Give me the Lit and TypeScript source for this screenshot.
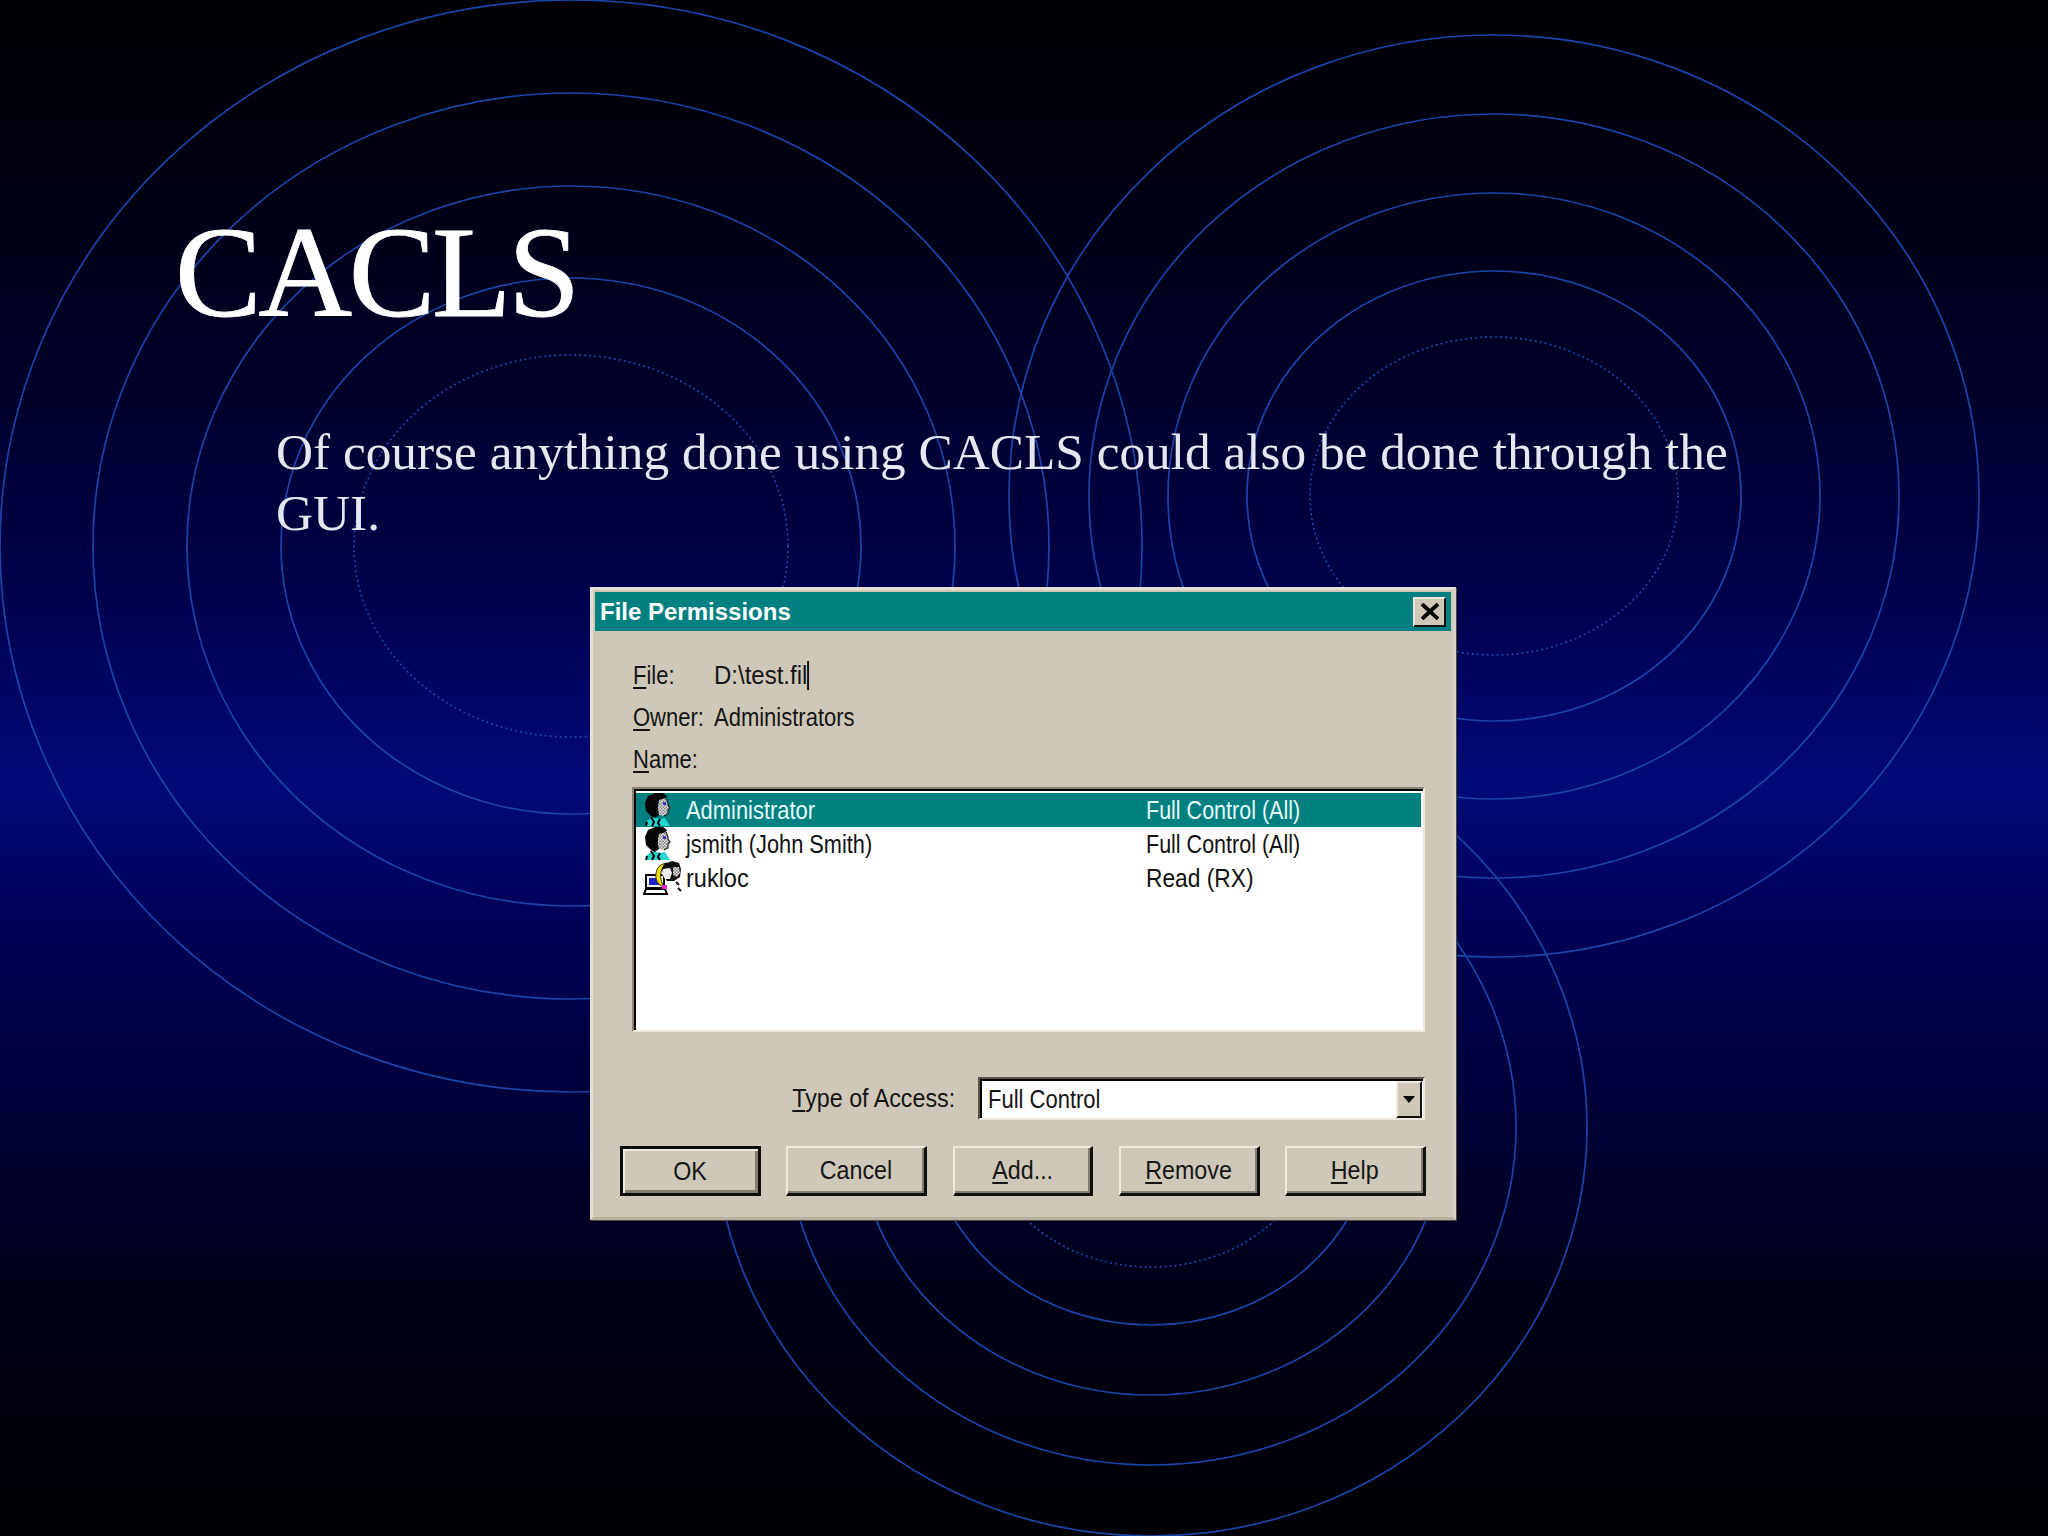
import { LitElement, html, css, svg } from "lit";
import { customElement } from "lit/decorators.js";

type Ring = { rx: number; ry: number; dotted?: boolean };
const SETS: { cx: number; cy: number; rings: Ring[] }[] = [
  {
    cx: 571, cy: 546,
    rings: [
      { rx: 571, ry: 546 }, { rx: 478, ry: 453 }, { rx: 384, ry: 360 }, { rx: 290, ry: 268 },
      { rx: 217, ry: 191, dotted: true },
    ],
  },
  {
    cx: 1494, cy: 496,
    rings: [
      { rx: 485, ry: 461 }, { rx: 405, ry: 382 }, { rx: 326, ry: 303 }, { rx: 247, ry: 225 },
      { rx: 184, ry: 159, dotted: true },
    ],
  },
  {
    cx: 1151, cy: 1127,
    rings: [
      { rx: 436, ry: 409 }, { rx: 365, ry: 338 }, { rx: 293, ry: 268 }, { rx: 222, ry: 198 },
      { rx: 166, ry: 140, dotted: true },
    ],
  },
];

const man = svg`<svg class="ico" viewBox="0 0 30 34" width="30" height="34">
  <defs><pattern id="d" width="3" height="3" patternUnits="userSpaceOnUse"><rect width="3" height="3" fill="#e8e8e8"/><rect width="1.5" height="1.5" fill="#808080"/><rect x="1.5" y="1.5" width="1.5" height="1.5" fill="#808080"/></pattern></defs>
  <path d="M4 28 L10 24 L17 26 L22 25 L27 33 L3 33Z" fill="#1fd6d2"/>
  <path d="M8 24 L11 29 L9 33 M17 26 L15 30 L17 33 M4 29 L3 33" stroke="#000" stroke-width="2" fill="none"/>
  <path d="M5 3 L12 0 L20 0 L24 3 L22 6 L16 8 L15 14 L16 22 L12 25 L8 23 L3 18 L2 10Z" fill="#060606"/>
  <path d="M16 7 L23 5 L25 10 L25 12 L27 15 L25 17 L25 21 L21 23 L16 22 L15 15Z" fill="url(#d)"/>
  <path d="M23 5 L25 10 L25 12 L27 15 L25 17 L25 21 L21 23" stroke="#222" stroke-width="1.2" fill="none"/>
  <rect x="20" y="9" width="3" height="3" fill="#3a32b8"/>
</svg>`;

const group = svg`<svg class="ico" viewBox="0 0 40 34" width="40" height="34">
  <rect x="3" y="14" width="18" height="13" fill="#f4f4f4" stroke="#000" stroke-width="2"/>
  <rect x="6" y="17" width="10" height="7" fill="#1a22c8"/>
  <path d="M1 33 L3 28 L22 28 L24 33Z" fill="#fff" stroke="#000" stroke-width="2"/>
  <path d="M24 2 C15 3 12 10 13 17 C14 22 17 25 21 26 C18 21 17 16 18 11 C19 7 21 4 24 2Z" fill="#f2dc10" stroke="#3a3000" stroke-width="1"/>
  <path d="M21 3 L29 0 L36 2 L38 8 L37 16 L31 20 L24 20 L20 14 L19 8Z" fill="#0e0e0e"/>
  <path d="M20 8 L27 7 L29 12 L27 18 L22 18 L19 13Z" fill="#efefef"/>
  <path d="M30 6 L36 6 L37 12 L34 16 L30 14Z" fill="url(#d)"/>
  <rect x="19" y="24" width="5" height="4" fill="#f020d0"/>
  <path d="M33 21 L36 24 M35 27 L38 30" stroke="#111" stroke-width="2"/>
</svg>`;

const ROWS = [
  { name: "Administrator", sn: 0.876, perm: "Full Control (All)", sp: 0.86, icon: man, sel: true },
  { name: "jsmith (John Smith)", sn: 0.87, perm: "Full Control (All)", sp: 0.86, icon: man, sel: false },
  { name: "rukloc", sn: 0.94, perm: "Read (RX)", sp: 0.91, icon: group, sel: false },
];

const BUTTONS = [
  { k: "", rest: "OK", def: true },
  { k: "", rest: "Cancel", def: false },
  { k: "A", rest: "dd...", def: false },
  { k: "R", rest: "emove", def: false },
  { k: "H", rest: "elp", def: false },
];

@customElement("app-root")
export class AppRoot extends LitElement {
  static styles = css`
    :host { display: block; width: 2048px; height: 1536px; position: relative; overflow: hidden;
      background: linear-gradient(180deg, #000004 0%, #000012 12%, #00002a 25%, #00004a 38%, #000a78 51%, #000058 60%, #000038 72%, #000016 85%, #000004 100%);
      font-family: "Liberation Serif", serif; }
    .rings { position: absolute; left: 0; top: 0; }
    .rings ellipse { fill: none; stroke: #1a44a8; stroke-width: 1.7; }
    .rings ellipse.dot { stroke-dasharray: 2 3; }
    .slide { position: relative; display: flex; flex-direction: column; height: 100%; box-sizing: border-box; padding: 197px 0 0 175px; }
    h1 { margin: 0; font: 400 130px/150px "Liberation Serif", serif; letter-spacing: -3.4px; color: #fff; -webkit-text-stroke: 0.8px #fff; }
    .body { margin: 74px 0 0 101px; width: 1500px; font-size: 51.3px; line-height: 61px; color: #e6e8f0; }
    .dlg { position: absolute; left: 590px; top: 587px; width: 866px; height: 633px; box-sizing: border-box;
      background: #cfc7b8; border-style: solid; border-width: 3px; border-color: #e4dfd2 #d8d2c4 #b8b0a0 #e4dfd2;
      box-shadow: 1px 1px 0 #4e4636;
      padding: 2px; display: flex; flex-direction: column;
      font-family: "Liberation Sans", sans-serif; font-size: 25px; color: #151515; }
    .t { display: inline-block; transform: scaleX(var(--sx, 0.88)); transform-origin: 0 50%; white-space: nowrap; }
    .t.r { transform-origin: 100% 50%; }
    .t.c { transform-origin: 50% 50%; }
    .tb { height: 39px; background: #008080; display: flex; align-items: center; justify-content: space-between; padding: 0 5px 0 5px; flex: none; }
    .tb b { font: 700 24px "Liberation Sans", sans-serif; color: #fff; }
    .x { width: 33px; height: 30px; box-sizing: border-box; background: #cfc7b8; border: 2px solid; border-color: #efeade #111 #111 #efeade; display: flex; align-items: center; justify-content: center; }
    .content { flex: 1; padding: 0 25px 0 38px; display: flex; flex-direction: column; }
    .info { display: grid; grid-template-columns: 81px 1fr; grid-auto-rows: 42px; margin-top: 23px; align-items: center; }
    .caret { border-right: 2px solid #111; }
    u { text-decoration-thickness: 2px; text-underline-offset: 3px; }
    .list { margin: 7px 0 0 -1px; width: 793px; height: 245px; box-sizing: border-box; background: #fff; border: 2px solid; border-color: #8a8270 #eee9dc #eee9dc #8a8270; box-shadow: inset 2px 2px 0 #000; padding: 4px 2px 0 2px; }
    .row { height: 34px; display: grid; grid-template-columns: 50px 460px 1fr; align-items: center; color: #111; }
    .row.sel { background: #008080; color: #e6fbfb; }
    .row .ico { margin-left: 7px; display: block; }
    .access { display: flex; justify-content: flex-end; align-items: center; margin-top: 45px; gap: 23px; height: 43px; padding-right: 1px; }
    .combo { width: 447px; height: 43px; box-sizing: border-box; background: #fff; border: 2px solid; border-color: #5c5444 #eee9dc #eee9dc #5c5444; box-shadow: inset 2px 2px 0 #000; display: flex; align-items: center; justify-content: space-between; padding: 2px 0 0 8px; }
    .arrow { width: 26px; height: 37px; box-sizing: border-box; background: #cfc7b8; border: 2px solid; border-color: #efeade #111 #111 #efeade; display: flex; align-items: center; justify-content: center; margin-right: 1px; }
    .arrow i { border: 6px solid transparent; border-top: 7px solid #000; border-bottom: 0; }
    .btns { display: flex; gap: 25.5px; margin: 26px 0 0 -13px; --sx: 0.93; }
    .btn { width: 141px; height: 50px; box-sizing: border-box; display: flex; align-items: center; justify-content: center; background: #cfc7b8; border-style: solid; border-width: 2px 3px 3px 2px; border-color: #efeade #111 #111 #efeade; box-shadow: inset -2px -2px 0 #857d6d; }
    .btn.def { border: 3px solid #0c0c0c; box-shadow: inset 2px 2px 0 #efeade, inset -3px -3px 0 #857d6d; }
    .s96 { --sx: 0.96; }
    .s93 { --sx: 0.93; }
  `;

  render() {
    return html`
      <svg class="rings" width="2048" height="1536" viewBox="0 0 2048 1536">
        ${SETS.map((s) => s.rings.map((r) => svg`<ellipse class=${r.dotted ? "dot" : ""} cx=${s.cx} cy=${s.cy} rx=${r.rx} ry=${r.ry}></ellipse>`))}
      </svg>
      <div class="slide">
        <h1>CACLS</h1>
        <p class="body">Of course anything done using CACLS could also be done through the GUI.</p>
      </div>
      <div class="dlg">
        <div class="tb">
          <b>File Permissions</b>
          <span class="x"><svg width="20" height="17" viewBox="0 0 20 17"><path d="M2 1 L18 16 M18 1 L2 16" stroke="#000" stroke-width="3.8"/></svg></span>
        </div>
        <div class="content">
          <div class="info">
            <span class="t"><u>F</u>ile:</span><span><span class="t s96 caret">D:\\test.fil</span></span>
            <span class="t"><u>O</u>wner:</span><span class="t">Administrators</span>
            <span class="t"><u>N</u>ame:</span><span></span>
          </div>
          <div class="list">
            ${ROWS.map((r) => html`<div class="row ${r.sel ? "sel" : ""}">
              <span>${r.icon}</span>
              <span><span class="t" style="--sx:${r.sn}">${r.name}</span></span>
              <span><span class="t" style="--sx:${r.sp}">${r.perm}</span></span>
            </div>`)}
          </div>
          <div class="access">
            <span class="t r s93"><u>T</u>ype of Access:</span>
            <div class="combo"><span class="t">Full Control</span><span class="arrow"><i></i></span></div>
          </div>
          <div class="btns">
            ${BUTTONS.map((b) => html`<div class="btn ${b.def ? "def" : ""}"><span class="t c">${b.k ? html`<u>${b.k}</u>` : ""}${b.rest}</span></div>`)}
          </div>
        </div>
      </div>
    `;
  }
}
